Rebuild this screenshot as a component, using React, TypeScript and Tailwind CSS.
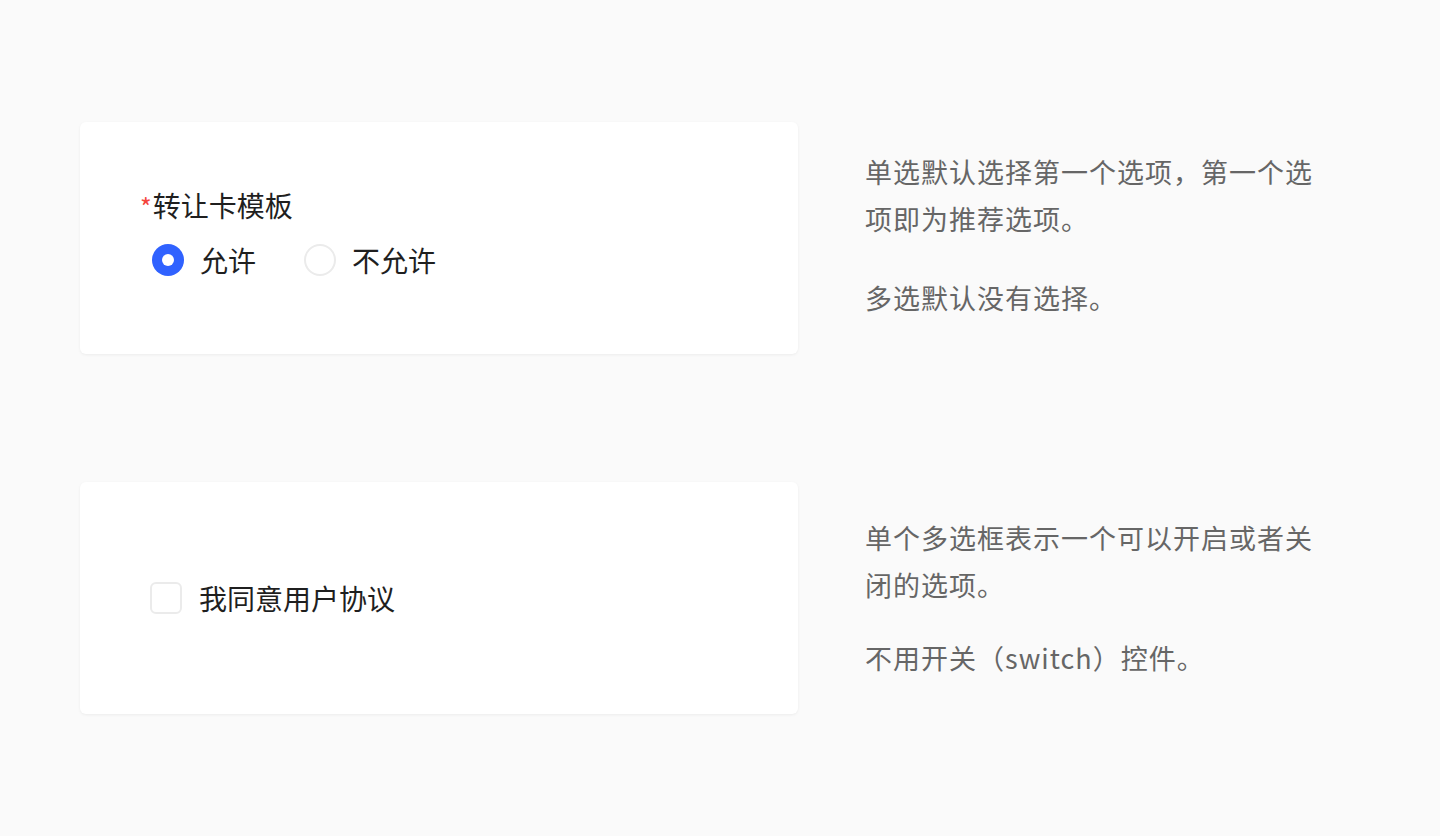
import { useState } from 'react'

const font = { fontFamily: '"Noto Sans CJK SC", "Noto Sans", sans-serif' }

function Radio({ checked, label, onClick }: { checked: boolean; label: string; onClick: () => void }) {
  return (
    <button type="button" onClick={onClick} className="flex items-center gap-4 cursor-pointer">
      {checked ? (
        <span className="w-8 h-8 rounded-full bg-[#3062ff] flex items-center justify-center">
          <span className="w-3 h-3 rounded-full bg-white" />
        </span>
      ) : (
        <span className="w-8 h-8 rounded-full bg-white border-2 border-[#ebebeb]" />
      )}
      <span className="text-[28px] leading-10 text-[#1f1f1f]">{label}</span>
    </button>
  )
}

function Note({ children, className = '' }: { children: React.ReactNode; className?: string }) {
  return <p className={`text-[27px] leading-[47px] tracking-[1px] text-[#666666] ${className}`}>{children}</p>
}

export default function App() {
  const [allow, setAllow] = useState(true)
  const [agree, setAgree] = useState(false)

  return (
    <div className="min-h-[836px] w-full bg-[#fafafa] pt-[122px] pl-20" style={font}>
      {/* Radio block */}
      <div className="flex items-start gap-[67px]">
        <div className="w-[718px] h-[232px] bg-white rounded-md shadow-[0_1px_3px_rgba(0,0,0,0.06)] pt-[63px] pl-[60px] flex flex-col gap-[14px]">
          <div className="flex items-baseline leading-10">
            <span className="text-[25px] text-[#f5453d] mr-px">*</span>
            <span className="text-[28px] text-[#1f1f1f]">转让卡模板</span>
          </div>
          <div className="flex items-center gap-12 pl-3">
            <Radio checked={allow} label="允许" onClick={() => setAllow(true)} />
            <Radio checked={!allow} label="不允许" onClick={() => setAllow(false)} />
          </div>
        </div>
        <div className="w-[452px] pt-[26px] flex flex-col gap-8">
          <Note>单选默认选择第一个选项，第一个选项即为推荐选项。</Note>
          <Note>多选默认没有选择。</Note>
        </div>
      </div>

      {/* Checkbox block */}
      <div className="flex items-start gap-[67px] mt-32">
        <div className="w-[718px] h-[232px] bg-white rounded-md shadow-[0_1px_3px_rgba(0,0,0,0.06)] pl-[70px] flex items-center">
          <button type="button" onClick={() => setAgree(!agree)} className="flex items-center gap-[17px] cursor-pointer">
            <span
              className={`w-8 h-8 rounded-md border-2 flex items-center justify-center ${
                agree ? 'bg-[#3062ff] border-[#3062ff]' : 'bg-white border-[#ebebeb]'
              }`}
            >
              {agree && (
                <svg viewBox="0 0 16 16" className="w-5 h-5" fill="none" stroke="white" strokeWidth="2.2" strokeLinecap="round" strokeLinejoin="round">
                  <path d="M3.5 8.5l3 3 6-7" />
                </svg>
              )}
            </span>
            <span className="text-[28px] leading-10 text-[#1f1f1f]">我同意用户协议</span>
          </button>
        </div>
        <div className="w-[452px] pt-[32px] flex flex-col gap-[26px]">
          <Note>单个多选框表示一个可以开启或者关闭的选项。</Note>
          <Note>不用开关（switch）控件。</Note>
        </div>
      </div>
    </div>
  )
}
